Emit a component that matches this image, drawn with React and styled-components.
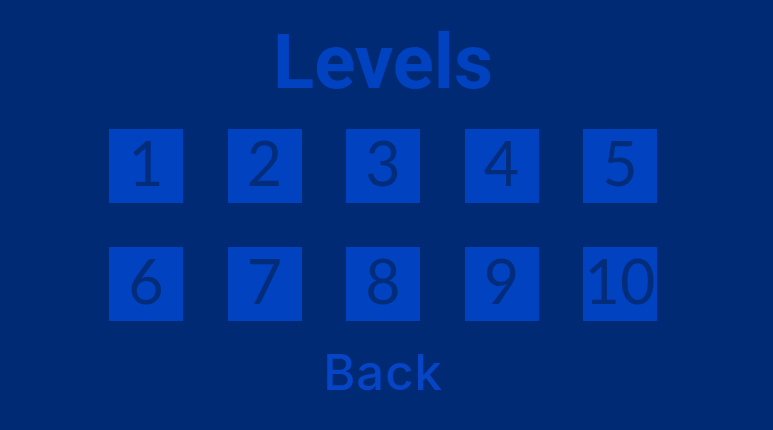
import React from "react";
import styled, { createGlobalStyle } from "styled-components";

const GlobalStyle = createGlobalStyle`
  html, body {
    margin: 0;
    padding: 0;
    background-color: #002a74;
  }
`;

const Screen = styled.main`
  width: 773px;
  height: 430px;
  box-sizing: border-box;
  padding: 24px 7px 0 0;
  background-color: #002a74;
  display: flex;
  flex-direction: column;
  align-items: center;
  overflow: hidden;
`;

const Title = styled.h1`
  margin: 0;
  font-family: Roboto, "Liberation Sans", sans-serif;
  font-weight: 700;
  font-size: 76px;
  line-height: 1;
  color: #0142c1;
`;

const Grid = styled.div`
  margin-top: 29px;
  display: grid;
  grid-template-columns: repeat(5, 74px);
  column-gap: 44.5px;
  row-gap: 44px;
`;

const Tile = styled.button`
  width: 74px;
  height: 74px;
  padding: 0 0 8px;
  border: none;
  background-color: #0142c1;
  display: flex;
  align-items: center;
  justify-content: center;
  font-family: Lato, "DejaVu Sans", sans-serif;
  font-weight: 400;
  font-size: 61px;
  line-height: 1;
  color: #032d7a;
  overflow: visible;
  white-space: nowrap;
  cursor: pointer;
`;

const Back = styled.button`
  margin-top: 27px;
  padding: 0;
  border: none;
  background: none;
  font-family: Inter, Roboto, "Liberation Sans", sans-serif;
  font-weight: 500;
  font-size: 49px;
  letter-spacing: 1px;
  line-height: 1;
  color: #0645c6;
  cursor: pointer;
`;

const levels = [1, 2, 3, 4, 5, 6, 7, 8, 9, 10];

const App = () => {
  return (
    <>
      <GlobalStyle />
      <Screen>
        <Title>Levels</Title>
        <Grid>
          {levels.map((n) => (
            <Tile key={n}>{n}</Tile>
          ))}
        </Grid>
        <Back>Back</Back>
      </Screen>
    </>
  );
};

export default App;
